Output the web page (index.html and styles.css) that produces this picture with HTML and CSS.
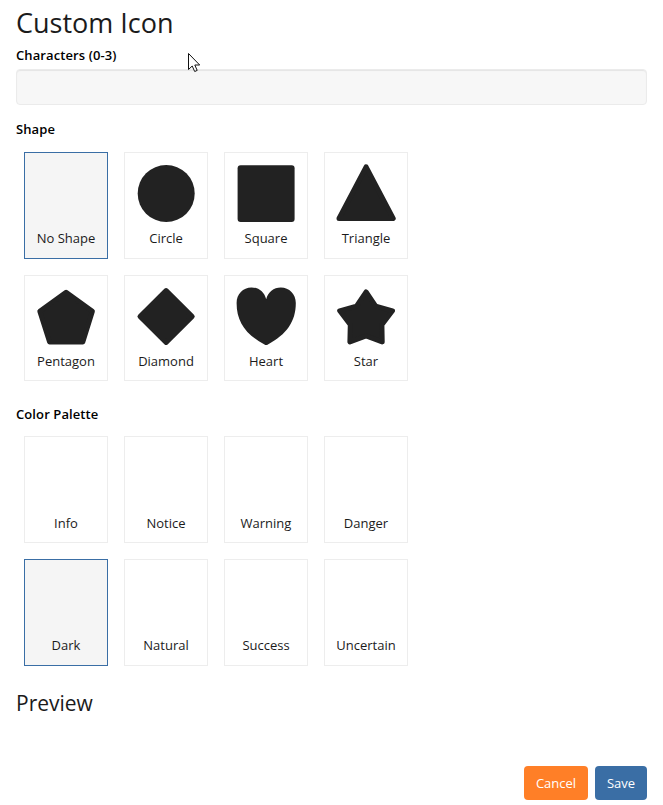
FILE: index.html
```
<!DOCTYPE html>
<html lang="en">
<head>
<meta charset="utf-8">
<title>Custom Icon</title>
<link rel="stylesheet" href="styles.css">
</head>
<body>
<main class="dialog">
  <h1 class="title">Custom Icon</h1>
  <label class="label" for="chars">Characters (0-3)</label>
  <input class="field" id="chars" type="text" maxlength="3">

  <h3 class="label label-shape">Shape</h3>
  <div class="grid grid-shapes">
    <div class="card selected"><svg class="shape" viewBox="0 0 60 60"></svg><span>No Shape</span></div>
    <div class="card"><svg class="shape" viewBox="0 0 60 60"><circle cx="30.2" cy="29.5" r="28.5"/></svg><span>Circle</span></div>
    <div class="card"><svg class="shape" viewBox="0 0 60 60"><rect x="1.6" y="1.2" width="57" height="56.8" rx="3"/></svg><span>Square</span></div>
    <div class="card"><svg class="shape" viewBox="0 0 60 60"><path class="round" d="M30.1 2.8 57.2 54.5H3Z"/></svg><span>Triangle</span></div>
    <div class="card"><svg class="shape" viewBox="0 0 60 60"><path class="round" d="M30.1 5.2 56.4 24.2 46.8 55.1H13.6L3.8 24.2Z"/></svg><span>Pentagon</span></div>
    <div class="card"><svg class="shape" viewBox="0 0 60 60"><path class="round" d="M30.1 3.6 56.2 29.5 30.1 55.4 4 29.5Z"/></svg><span>Diamond</span></div>
    <div class="card"><svg class="shape" viewBox="0 0 60 60"><path d="M30.2 12.3C28.5 5 22.5.4 15.5.4 7 .4.6 7 .6 16 .6 34.5 9.5 47.5 28.5 57.4Q30.2 58.4 31.9 57.4C50.5 47.5 59.8 34.5 59.8 16 59.8 7 53.3.4 44.8.4 37.8.4 31.8 5 30.2 12.3Z"/></svg><span>Heart</span></div>
    <div class="card"><svg class="shape" viewBox="0 0 60 60"><path class="round" d="M30.1 5 39.7 19.1 56.5 23.8 45.9 37.7 46.2 54.9 30.1 49 13.9 54.9 14.3 37.7 3.7 23.8 20.5 19.1Z"/></svg><span>Star</span></div>
  </div>

  <h3 class="label label-palette">Color Palette</h3>
  <div class="grid grid-palette">
    <div class="card"><span>Info</span></div>
    <div class="card"><span>Notice</span></div>
    <div class="card"><span>Warning</span></div>
    <div class="card"><span>Danger</span></div>
    <div class="card lower selected"><span>Dark</span></div>
    <div class="card lower"><span>Natural</span></div>
    <div class="card lower"><span>Success</span></div>
    <div class="card lower"><span>Uncertain</span></div>
  </div>

  <h2 class="preview">Preview</h2>
  <div class="actions">
    <button class="btn cancel" type="button">Cancel</button>
    <button class="btn save" type="button">Save</button>
  </div>
</main>
<svg class="cursor" viewBox="0 0 13 20"><path d="M.5.5V16.5L4.2 13 6.7 18.5 9.2 17.4 6.8 12H11.7Z"/></svg>
</body>
</html>
```
FILE: styles.css
```
* {
  box-sizing: border-box;
}

body {
  margin: 0;
  background: #fff;
  color: #1b1b1b;
  font: 13px/18px "Open Sans", sans-serif;
}

.dialog {
  display: flex;
  flex-direction: column;
  height: 805px;
  padding: 5px 16px 5px;
}

.title {
  margin: 0;
  font-size: 27px;
  font-weight: 400;
  line-height: 36px;
}

.label {
  margin: 5px 0 0;
  font-size: 13px;
  font-weight: 600;
  line-height: 18px;
  letter-spacing: .1px;
  color: #000;
}

.field {
  width: 100%;
  height: 36px;
  margin: 5px 0 0;
  padding: 6px 12px;
  border: 1px solid #ebebeb;
  border-radius: 4px;
  background: #f7f7f7;
  box-shadow: inset 0 1px 1px rgba(0, 0, 0, .075);
  font: inherit;
}

.label-shape {
  margin-top: 15px;
}

.grid {
  display: grid;
  grid-template-columns: repeat(4, 84px);
  gap: 16px;
  margin-left: 8px;
}

.grid-shapes {
  grid-template-rows: 107px 106px;
  margin-top: 14px;
}

.grid-palette {
  grid-template-rows: 107px 107px;
  margin-top: 13px;
}

.label-palette {
  margin-top: 24px;
}

.card {
  display: flex;
  flex-direction: column;
  align-items: center;
  justify-content: flex-end;
  padding-bottom: 10px;
  border: 1px solid #ededed;
}

.card.lower {
  padding-bottom: 11px;
}

.grid-shapes .card {
  justify-content: flex-start;
  padding: 11px 0 0;
}

.grid-shapes span {
  margin-top: 5px;
}

.card.selected {
  border-color: #3a6ea5;
  background: #f5f5f5;
}

.shape {
  display: block;
  width: 60px;
  height: 60px;
  fill: #222;
}

.round {
  stroke: #222;
  stroke-width: 5px;
  stroke-linejoin: round;
}

.preview {
  margin: 23px 0 0;
  font-size: 21px;
  font-weight: 400;
  line-height: 29px;
}

.actions {
  display: flex;
  justify-content: flex-end;
  gap: 7px;
  margin-top: auto;
}

.btn {
  height: 34px;
  padding: 0;
  border: 0;
  border-radius: 4px;
  color: #fff;
  font: inherit;
}

.cancel {
  width: 64px;
  background: #ff7f27;
}

.save {
  width: 52px;
  background: #3a6ea5;
}

.cursor {
  position: absolute;
  top: 53px;
  left: 188px;
  width: 13px;
  height: 20px;
  fill: #fff;
  stroke: #111;
}
```
